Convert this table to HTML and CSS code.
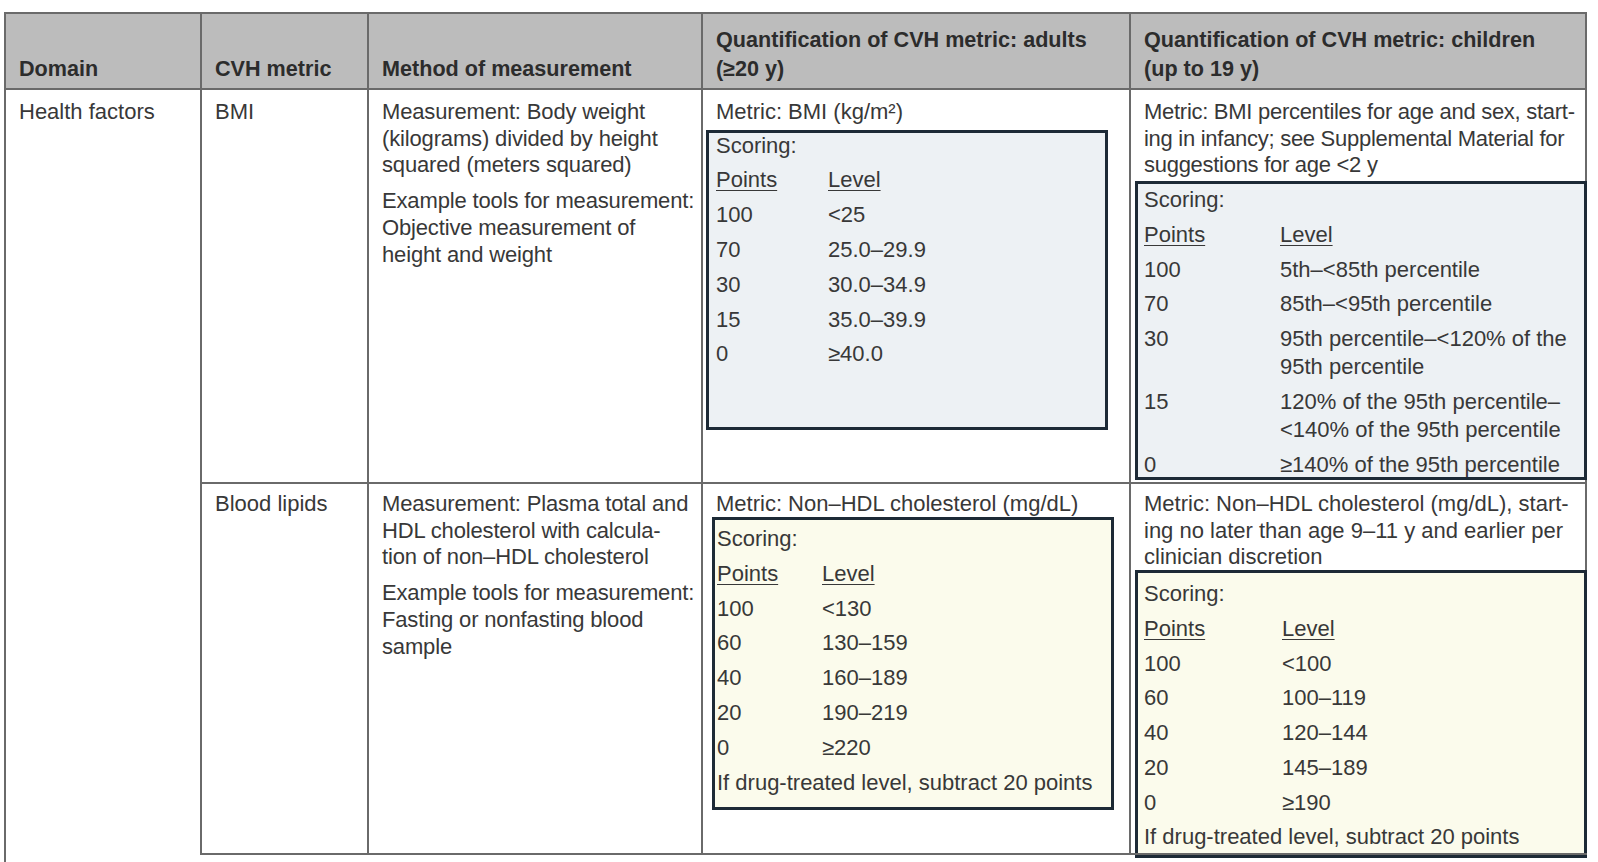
FILE: index.html
```html
<!DOCTYPE html>
<html lang="en">
<head>
<meta charset="utf-8">
<title>CVH metrics</title>
<link rel="stylesheet" href="styles.css">
</head>
<body>
<div class="cvh-table">
  <div class="th">Domain</div>
  <div class="th">CVH metric</div>
  <div class="th">Method of measurement</div>
  <div class="th">Quantification of CVH metric: adults<br>(≥20 y)</div>
  <div class="th last">Quantification of CVH metric: children<br>(up to 19 y)</div>

  <div class="td td--r2 domain">Health factors</div>
  <div class="td td--r2">BMI</div>
  <div class="td td--r2 method">
    <p>Measurement: Body weight<br>(kilograms) divided by height<br>squared (meters squared)</p>
    <p>Example tools for measurement:<br>Objective measurement of<br>height and weight</p>
  </div>
  <div class="td td--r2">
    <p class="metric">Metric: BMI (kg/m²)</p>
    <div class="score score--blue score--bmi-adult">
      <div class="score__title">Scoring:</div>
      <div class="score__row"><span class="pts"><span class="ul">Points</span></span><span class="lvl"><span class="ul">Level</span></span></div>
      <div class="score__row"><span class="pts">100</span><span class="lvl">&lt;25</span></div>
      <div class="score__row"><span class="pts">70</span><span class="lvl">25.0–29.9</span></div>
      <div class="score__row"><span class="pts">30</span><span class="lvl">30.0–34.9</span></div>
      <div class="score__row"><span class="pts">15</span><span class="lvl">35.0–39.9</span></div>
      <div class="score__row"><span class="pts">0</span><span class="lvl">≥40.0</span></div>
    </div>
  </div>
  <div class="td td--r2 last">
    <p class="metric metric--tight">Metric: BMI percentiles for age and sex, start-<br>ing in infancy; see Supplemental Material for<br>suggestions for age &lt;2 y</p>
    <div class="score score--blue score--bmi-child">
      <div class="score__title">Scoring:</div>
      <div class="score__row"><span class="pts"><span class="ul">Points</span></span><span class="lvl"><span class="ul">Level</span></span></div>
      <div class="score__row"><span class="pts">100</span><span class="lvl">5th–&lt;85th percentile</span></div>
      <div class="score__row"><span class="pts">70</span><span class="lvl">85th–&lt;95th percentile</span></div>
      <div class="score__row"><span class="pts">30</span><span class="lvl">95th percentile–&lt;120% of the<br>95th percentile</span></div>
      <div class="score__row"><span class="pts">15</span><span class="lvl">120% of the 95th percentile–<br>&lt;140% of the 95th percentile</span></div>
      <div class="score__row"><span class="pts">0</span><span class="lvl">≥140% of the 95th percentile</span></div>
    </div>
  </div>

  <div class="td td--r3">Blood lipids</div>
  <div class="td td--r3 method">
    <p>Measurement: Plasma total and<br>HDL cholesterol with calcula-<br>tion of non–HDL cholesterol</p>
    <p>Example tools for measurement:<br>Fasting or nonfasting blood<br>sample</p>
  </div>
  <div class="td td--r3">
    <p class="metric">Metric: Non–HDL cholesterol (mg/dL)</p>
    <div class="score score--yellow score--lipid-adult">
      <div class="score__title">Scoring:</div>
      <div class="score__row"><span class="pts"><span class="ul">Points</span></span><span class="lvl"><span class="ul">Level</span></span></div>
      <div class="score__row"><span class="pts">100</span><span class="lvl">&lt;130</span></div>
      <div class="score__row"><span class="pts">60</span><span class="lvl">130–159</span></div>
      <div class="score__row"><span class="pts">40</span><span class="lvl">160–189</span></div>
      <div class="score__row"><span class="pts">20</span><span class="lvl">190–219</span></div>
      <div class="score__row"><span class="pts">0</span><span class="lvl">≥220</span></div>
      <div class="score__note">If drug-treated level, subtract 20 points</div>
    </div>
  </div>
  <div class="td td--r3 last">
    <p class="metric">Metric: Non–HDL cholesterol (mg/dL), start-<br>ing no later than age 9–11 y and earlier per<br>clinician discretion</p>
    <div class="score score--yellow score--lipid-child">
      <div class="score__title">Scoring:</div>
      <div class="score__row"><span class="pts"><span class="ul">Points</span></span><span class="lvl"><span class="ul">Level</span></span></div>
      <div class="score__row"><span class="pts">100</span><span class="lvl">&lt;100</span></div>
      <div class="score__row"><span class="pts">60</span><span class="lvl">100–119</span></div>
      <div class="score__row"><span class="pts">40</span><span class="lvl">120–144</span></div>
      <div class="score__row"><span class="pts">20</span><span class="lvl">145–189</span></div>
      <div class="score__row"><span class="pts">0</span><span class="lvl">≥190</span></div>
      <div class="score__note">If drug-treated level, subtract 20 points</div>
    </div>
  </div>

  <div class="tail"></div>
  <div class="tail"></div>
  <div class="tail"></div>
  <div class="tail"></div>
</div>
</body>
</html>
```
FILE: styles.css
```css
html, body {
  margin: 0;
  padding: 0;
  overflow: hidden;
  background: #ffffff;
}

body {
  font-family: "Liberation Sans", Arial, Helvetica, sans-serif;
  font-size: 22px;
  color: #383838;
}

.cvh-table {
  display: grid;
  grid-template-columns: 196px 167px 334px 428px 458px;
  grid-template-rows: 76px 394px 371px 30px;
  margin: 12px 0 0 4px;
}

.th,
.td {
  box-sizing: border-box;
  border-left: 2px solid #6a6a6a;
  border-top: 2px solid #6a6a6a;
  min-width: 0;
}

.th {
  background: #bcbcbc;
  color: #2c2c2c;
  font-weight: bold;
  font-size: 21.6px;
  line-height: 29px;
  padding: 0 13px 5.5px 13px;
  display: flex;
  flex-direction: column;
  justify-content: flex-end;
  white-space: nowrap;
}

.td {
  padding: 9px 0 0 13px;
  line-height: 26.7px;
  white-space: nowrap;
}

.td--r3 {
  padding-top: 7px;
}

.method {
  letter-spacing: -0.15px;
}

.last {
  border-right: 2px solid #6a6a6a;
}

.domain {
  grid-column: 1;
  grid-row: 2 / span 3;
}

.tail {
  border-top: 2px solid #6a6a6a;
}

.td p {
  margin: 0 0 9px 0;
}

.td p.metric {
  margin: 0;
}

.td p.metric--tight {
  letter-spacing: -0.28px;
}

/* scoring boxes */
.score {
  box-sizing: border-box;
  border: 3px solid #1d2a36;
  white-space: nowrap;
}

.score--blue {
  background: #edf1f4;
}

.score--yellow {
  background: #fbfbec;
}

.score__title,
.score__row,
.score__note {
  line-height: 28px;
  padding: 3.4px 0;
}

.score__row {
  display: flex;
}

.pts {
  flex: 0 0 auto;
}

.lvl {
  flex: 1 1 auto;
}

.ul {
  text-decoration: underline;
  text-decoration-thickness: 1px;
  text-underline-offset: 3px;
}

.score--bmi-adult {
  width: 402px;
  height: 300px;
  margin: 4px 0 0 -10px;
  padding-left: 7px;
}
.score--bmi-adult .score__title {
  margin-top: -4.4px;
}
.score--bmi-adult .pts {
  width: 112px;
}

.score--lipid-adult {
  width: 402px;
  height: 293px;
  margin: -1px 0 0 -4px;
  padding-left: 2px;
}
.score--lipid-adult .score__title {
  margin-top: 2px;
}
.score--lipid-adult .pts {
  width: 105px;
}

.score--bmi-child {
  width: 452px;
  height: 299px;
  margin: 2px 0 0 -9px;
  padding-left: 6px;
}
.score--bmi-child .score__title {
  margin-top: -1.5px;
}
.score--bmi-child .pts {
  width: 136px;
}

.score--lipid-child {
  width: 452px;
  height: 288px;
  margin: -1px 0 0 -9px;
  padding-left: 6px;
}
.score--lipid-child .score__title {
  margin-top: 3.5px;
}
.score--lipid-child .pts {
  width: 138px;
}
```
